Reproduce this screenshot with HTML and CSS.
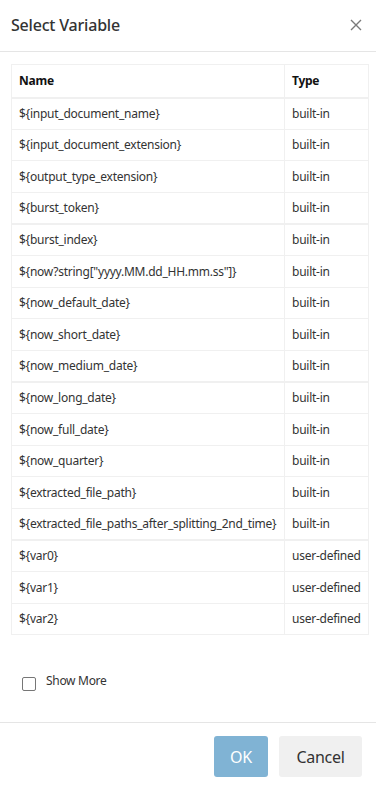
FILE: index.html
```html
<!DOCTYPE html>
<html lang="en">
<head>
  <meta charset="UTF-8">
  <meta name="viewport" content="width=device-width, initial-scale=1.0">
  <title>Select Variable</title>
  <link rel="stylesheet" href="styles.css">
</head>
<body>
  <div class="modal">
    <div class="modal-header">
      <h4 class="modal-title">Select Variable</h4>
      <button class="close" aria-label="Close">
        <svg width="12" height="12" viewBox="0 0 12 12"><path d="M1 1L11 11M11 1L1 11" stroke="#7a7a7a" stroke-width="1.4" fill="none"/></svg>
      </button>
    </div>
    <div class="modal-body">
      <table class="var-table">
        <thead>
          <tr><th class="col-name">Name</th><th>Type</th></tr>
        </thead>
        <tbody>
          <tr><td>${input_document_name}</td><td>built-in</td></tr>
          <tr><td>${input_document_extension}</td><td>built-in</td></tr>
          <tr><td>${output_type_extension}</td><td>built-in</td></tr>
          <tr><td>${burst_token}</td><td>built-in</td></tr>
          <tr class="group-start"><td>${burst_index}</td><td>built-in</td></tr>
          <tr><td>${now?string["yyyy.MM.dd_HH.mm.ss"]}</td><td>built-in</td></tr>
          <tr><td>${now_default_date}</td><td>built-in</td></tr>
          <tr><td>${now_short_date}</td><td>built-in</td></tr>
          <tr><td>${now_medium_date}</td><td>built-in</td></tr>
          <tr class="group-start"><td>${now_long_date}</td><td>built-in</td></tr>
          <tr><td>${now_full_date}</td><td>built-in</td></tr>
          <tr><td>${now_quarter}</td><td>built-in</td></tr>
          <tr><td>${extracted_file_path}</td><td>built-in</td></tr>
          <tr><td>${extracted_file_paths_after_splitting_2nd_time}</td><td>built-in</td></tr>
          <tr class="group-start"><td>${var0}</td><td>user-defined</td></tr>
          <tr><td>${var1}</td><td>user-defined</td></tr>
          <tr><td>${var2}</td><td>user-defined</td></tr>
        </tbody>
      </table>
      <label class="show-more">
        <input type="checkbox">
        <span>Show More</span>
      </label>
    </div>
    <div class="modal-footer">
      <button class="btn btn-primary" disabled>OK</button>
      <button class="btn btn-default">Cancel</button>
    </div>
  </div>
</body>
</html>
```

FILE: styles.css
```css
* {
  box-sizing: border-box;
}
body {
  margin: 0;
  background-color: #fff;
  font-family: "Noto Sans", "Open Sans", sans-serif;
  color: #333;
}
.modal {
  width: 376px;
  height: 785px;
  background-color: #fff;
}
.modal-header {
  height: 52px;
  display: flex;
  align-items: center;
  justify-content: space-between;
  padding: 0 11px 2px 11px;
  border-bottom: 1px solid #e5e5e5;
}
.modal-title {
  margin: 0;
  font-size: 16px;
  font-weight: 500;
  color: #333;
  letter-spacing: -0.2px;
}
.close {
  background: none;
  border: none;
  padding: 0;
  margin-right: 2px;
  width: 14px;
  height: 14px;
  display: flex;
  align-items: center;
  justify-content: center;
  cursor: pointer;
}
.modal-body {
  padding: 12px 7px 0 11px;
  height: 671px;
  border-bottom: 1px solid #e5e5e5;
}
.var-table {
  width: 358px;
  border-collapse: collapse;
  font-size: 12px;
  letter-spacing: -0.25px;
  border: 1px solid #f0f0f0;
}
.var-table th {
  text-align: left;
  font-weight: bold;
  color: #111;
  height: 33px;
  padding: 0 7px;
  border: 1px solid #f0f0f0;
  border-bottom-width: 2px;
}
.var-table .col-name {
  width: 273px;
}
.var-table td {
  height: 31.6px;
  padding: 0 7px;
  border: 1px solid #f0f0f0;
  white-space: nowrap;
  color: #333;
}
.var-table tr.group-start td {
  border-top-width: 2px;
}
.show-more {
  display: flex;
  align-items: flex-start;
  margin-top: 37px;
  margin-left: 11px;
  font-size: 12px;
  color: #333;
  letter-spacing: -0.3px;
}
.show-more input {
  appearance: none;
  width: 14px;
  height: 14px;
  margin: 5px 10px 0 0;
  border: 1px solid #767676;
  border-radius: 2px;
  background: #fff;
}
.modal-footer {
  display: flex;
  justify-content: flex-end;
  gap: 11px;
  padding: 13px 14px 0 0;
}
.btn {
  height: 41px;
  border: none;
  border-radius: 3px;
  font-family: "Noto Sans", "Open Sans", sans-serif;
  font-size: 16px;
  letter-spacing: -0.3px;
  cursor: pointer;
}
.btn-primary {
  width: 54px;
  background-color: #80b3d4;
  color: #fff;
}
.btn-default {
  width: 83px;
  background-color: #f0f0f0;
  color: #333;
}
```
